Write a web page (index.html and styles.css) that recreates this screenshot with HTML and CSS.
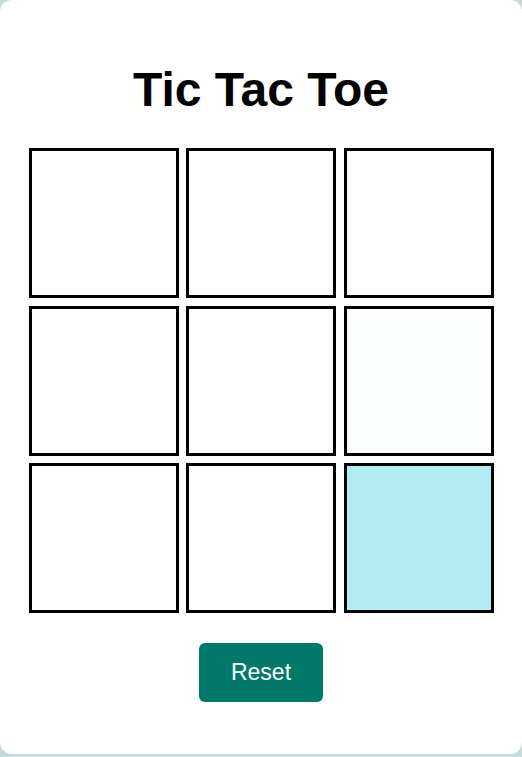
FILE: index.html
```html
<!DOCTYPE html>
<html lang="en">
<head>
    <meta charset="UTF-8">
    <meta name="viewport" content="width=device-width, initial-scale=1.0">
    <title>Tic Tac Toe</title>
    <link rel="stylesheet" href="styles.css">
</head>
<body>
    <div class="container">
        <h1>Tic Tac Toe</h1>
        <div class="board">
            <div class="cell"></div>
            <div class="cell"></div>
            <div class="cell"></div>
            <div class="cell"></div>
            <div class="cell"></div>
            <div class="cell fading"></div>
            <div class="cell"></div>
            <div class="cell"></div>
            <div class="cell hovered"></div>
        </div>
        <button class="reset">Reset</button>
    </div>
</body>
</html>
```

FILE: styles.css
```css
body {
    font-family: Arial, "Liberation Sans", sans-serif;
    background-color: #c6dbdc;
    margin: 0;
}
.container {
    background: white;
    border-radius: 12px;
    padding: 62px 28px 52px;
    display: flex;
    flex-direction: column;
    align-items: center;
}
h1 {
    font-size: 48px;
    margin: 0 0 31px;
    color: #000;
}
.board {
    display: grid;
    grid-template-columns: repeat(3, 150px);
    grid-template-rows: repeat(3, 150px);
    gap: 7.5px;
}
.cell {
    border: 3px solid #000;
    background: #fff;
}
.cell.fading {
    background: #fcfdff;
}
.cell.hovered {
    background: #b2ebf2;
}
.reset {
    margin-top: 30px;
    background-color: #00796b;
    color: white;
    border: none;
    padding: 16px 32px;
    border-radius: 6px;
    font-family: Arial, "Liberation Sans", sans-serif;
    font-size: 23px;
    cursor: pointer;
}
```
